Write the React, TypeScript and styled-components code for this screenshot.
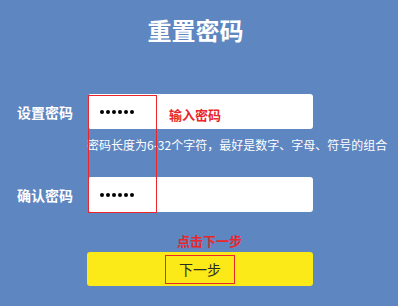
import * as React from 'react';
import styled, { createGlobalStyle } from 'styled-components';

const GlobalStyle = createGlobalStyle`
  html, body {
    margin: 0;
    padding: 0;
    background: #5e86c1;
  }
  body {
    font-family: "Noto Sans CJK SC", "Liberation Sans", sans-serif;
  }
`;

const Page = styled.div`
  position: relative;
  width: 398px;
  height: 306px;
  overflow: hidden;
  background: #5e86c1;
  color: #fff;
`;

const Title = styled.h1`
  margin: 0;
  padding-top: 17px;
  width: 391px;
  text-align: center;
  font-size: 24px;
  line-height: 26px;
  font-weight: 700;
`;

const Form = styled.div`
  display: flex;
  flex-direction: column;
  margin-top: 51px;
`;

const Row = styled.div`
  display: grid;
  grid-template-columns: 88px 225px;
  align-items: center;
  height: 35px;
`;

const Label = styled.label`
  padding-left: 17px;
  font-size: 14px;
  font-weight: 700;
  line-height: 16px;
`;

const Field = styled.div`
  display: flex;
  align-items: center;
  height: 35px;
  padding-left: 12px;
  background: #fff;
  border-radius: 3px;
`;

const Dots = styled.div`
  display: flex;
  gap: 2px;
`;

const Dot = styled.span`
  width: 4px;
  height: 4px;
  border-radius: 50%;
  background: #000;
`;

const Note = styled.span<{ $offset?: number }>`
  margin-left: ${(p) => p.$offset ?? 0}px;
  margin-top: 6px;
  color: #e8262c;
  font-size: 13px;
  font-weight: 700;
  line-height: 14px;
`;

const Hint = styled.p`
  margin: 9px 0 0;
  padding-left: 87px;
  font-size: 12px;
  line-height: 14px;
  white-space: nowrap;
`;

const Gap = styled.div<{ $h: number }>`
  height: ${(p) => p.$h}px;
`;

const ClickNote = styled.div`
  margin: 21px 0 0 177px;
  color: #e8262c;
  font-size: 13px;
  font-weight: 700;
  line-height: 15px;
`;

const Submit = styled.button`
  display: flex;
  align-items: center;
  justify-content: center;
  margin: 4px 0 0 87px;
  width: 226px;
  height: 34px;
  padding: 0;
  border: 0;
  border-radius: 3px;
  background: #fbea17;
  font-family: inherit;
  cursor: pointer;
`;

const SubmitText = styled.span`
  display: flex;
  align-items: center;
  justify-content: center;
  width: 70px;
  height: 29px;
  box-sizing: border-box;
  border: 1px solid #e8262c;
  color: #2a2a2a;
  font-size: 14px;
`;

const Marker = styled.div`
  position: absolute;
  left: 88px;
  top: 95px;
  width: 69px;
  height: 118px;
  box-sizing: border-box;
  border: 1px solid #e8262c;
  pointer-events: none;
`;

const PasswordDots = () => (
  <Dots>
    {[0, 1, 2, 3, 4, 5].map((i) => (
      <Dot key={i} />
    ))}
  </Dots>
);

export default function App() {
  return (
    <Page>
      <GlobalStyle />
      <Title>重置密码</Title>
      <Form>
        <Row>
          <Label>设置密码</Label>
          <Field>
            <PasswordDots />
            <Note $offset={35}>输入密码</Note>
          </Field>
        </Row>
        <Hint>密码长度为6-32个字符，最好是数字、字母、符号的组合</Hint>
        <Gap $h={25} />
        <Row>
          <Label>确认密码</Label>
          <Field>
            <PasswordDots />
          </Field>
        </Row>
        <ClickNote>点击下一步</ClickNote>
        <Submit>
          <SubmitText>下一步</SubmitText>
        </Submit>
      </Form>
      <Marker />
    </Page>
  );
}
